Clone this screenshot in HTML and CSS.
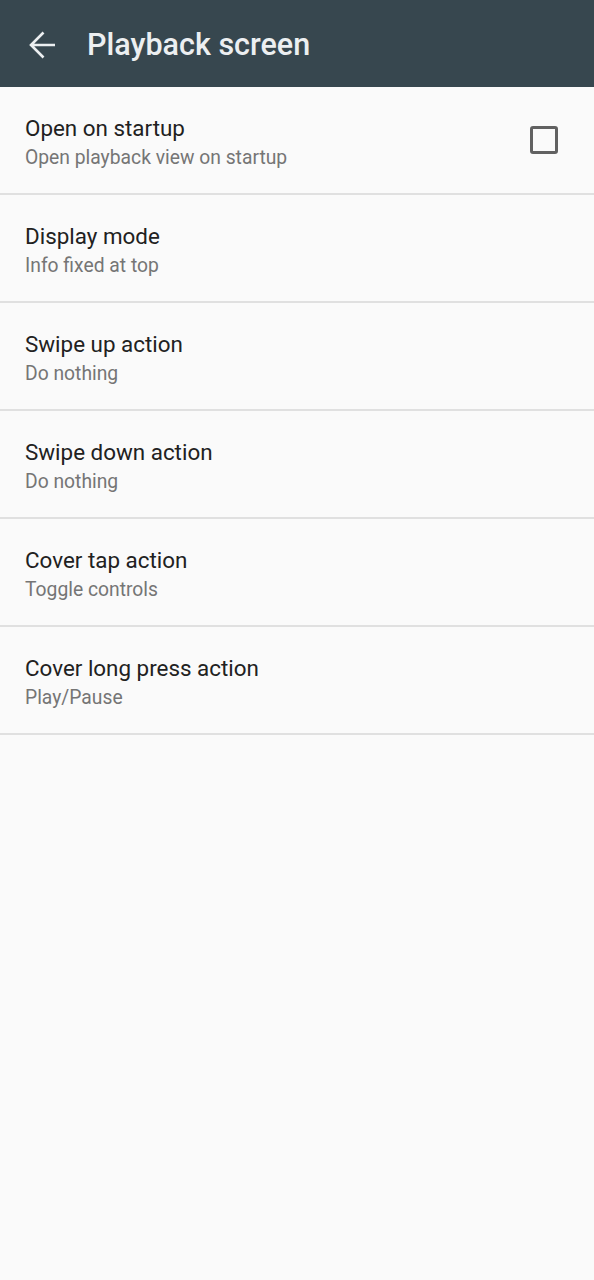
FILE: index.html
```html
<!DOCTYPE html>
<html lang="en">
<head>
    <meta charset="UTF-8">
    <meta name="viewport" content="width=device-width, initial-scale=1.0">
    <title>Playback screen</title>
    <link rel="stylesheet" href="styles.css">
</head>
<body>
    <header class="toolbar">
        <svg class="back" viewBox="0 0 28 28" width="28" height="28">
            <path d="M2 14H26M14.5 1.5L2 14L14.5 26.5" fill="none" stroke="#eceff1" stroke-width="2.6"/>
        </svg>
        <h1>Playback screen</h1>
    </header>
    <div class="list">
        <div class="pref">
            <div class="texts">
                <div class="title">Open on startup</div>
                <div class="summary">Open playback view on startup</div>
            </div>
            <div class="checkbox"></div>
        </div>
        <div class="pref">
            <div class="texts">
                <div class="title">Display mode</div>
                <div class="summary">Info fixed at top</div>
            </div>
        </div>
        <div class="pref">
            <div class="texts">
                <div class="title">Swipe up action</div>
                <div class="summary">Do nothing</div>
            </div>
        </div>
        <div class="pref">
            <div class="texts">
                <div class="title">Swipe down action</div>
                <div class="summary">Do nothing</div>
            </div>
        </div>
        <div class="pref">
            <div class="texts">
                <div class="title">Cover tap action</div>
                <div class="summary">Toggle controls</div>
            </div>
        </div>
        <div class="pref">
            <div class="texts">
                <div class="title">Cover long press action</div>
                <div class="summary">Play/Pause</div>
            </div>
        </div>
    </div>
</body>
</html>
```

FILE: styles.css
```css
* {
    margin: 0;
    padding: 0;
    box-sizing: border-box;
}
body {
    width: 594px;
    height: 1280px;
    background: #fafafa;
    font-family: Roboto, "Noto Sans", sans-serif;
}
.toolbar {
    height: 87px;
    background: #37474f;
    display: flex;
    align-items: center;
    padding: 2px 0 0 29px;
}
.toolbar .back {
    margin-right: 30px;
}
.toolbar h1 {
    font-size: 30.5px;
    font-weight: 500;
    color: #eceff1;
}
.pref {
    height: 108px;
    border-bottom: 2px solid #e0e0e0;
    display: flex;
    align-items: center;
    padding: 0 36px 0 25px;
}
.texts {
    flex: 1;
    margin-top: 6px;
}
.title {
    font-size: 22.4px;
    color: #212121;
    line-height: 29px;
}
.summary {
    font-size: 19.3px;
    color: #757575;
    line-height: 29px;
}
.checkbox {
    width: 28px;
    height: 28px;
    border: 3px solid #616161;
    border-radius: 3px;
}
```
